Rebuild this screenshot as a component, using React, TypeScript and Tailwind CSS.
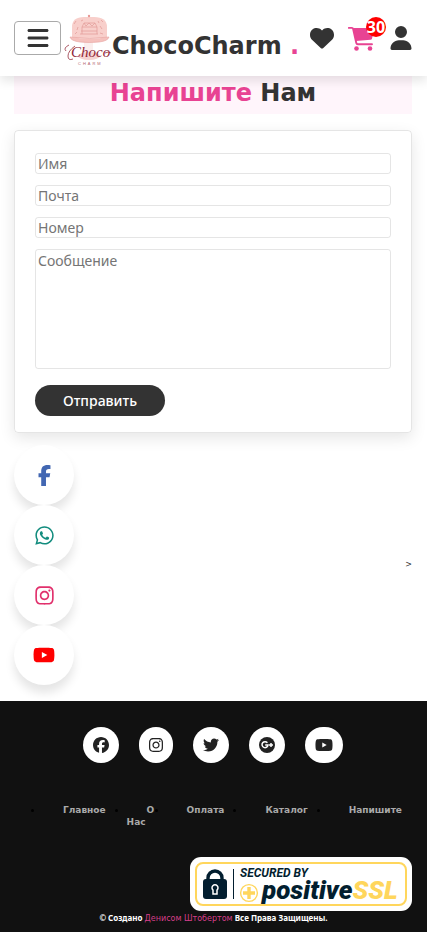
import type { ReactNode } from 'react';
import {
  FaBars,
  FaFacebook,
  FaFacebookF,
  FaHeart,
  FaInstagram,
  FaTwitter,
  FaUser,
  FaWhatsapp,
  FaYoutube,
} from 'react-icons/fa6';

function CakeLogo() {
  return (
    <svg viewBox="0 0 48 52" className="mt-1 h-[52px] w-12 shrink-0" role="img" aria-label="Choco Charm">
      <rect x="20" y="27" width="9" height="14" fill="#fbeeed" />
      <ellipse cx="25" cy="42" rx="11" ry="4" fill="#f6d3d1" />
      <path d="M8 24V13Q8 3 20 3h10Q43 3 43 13v11z" fill="#f8cfcb" />
      <path d="M6 23q20 3 39 0-1 4-10 5-10 1-19 0Q7 27 6 23z" fill="#f5c1bd" stroke="#e6a19e" strokeWidth=".6" />
      <path d="M18 20v-7l2-4h11l2 4v7M18 13h15M17 17h16M20 9l2 3 3-3 3 3 3-3M16 20h18" fill="none" stroke="#e3a09c" strokeWidth=".8" />
      <path d="M10 10l2-3M13 16l1-3M11 20l2-2M39 8l-2-2M38 15l-2-3M39 20l-3-1M17 7l2-1M35 9l-1-2" stroke="#e3a09c" strokeWidth=".8" />
      <circle cx="25" cy="2" r="1.2" fill="#e89a97" />
      <path d="M5 31Q-1 34 2 37M11 32Q4 37 4 42q0 5 5 3M41 39q4-2 6 0" fill="none" stroke="#96303f" strokeWidth=".8" />
      <text x="7" y="43" fontFamily="'Liberation Serif', serif" fontStyle="italic" fontWeight="400" fontSize="15" fill="#902637">Choco</text>
      <text x="14" y="51" fontFamily="'Liberation Sans', sans-serif" fontWeight="400" fontSize="4" letterSpacing="2" fill="#b36470">CHARM</text>
    </svg>
  );
}

function CartIcon() {
  return (
    <svg viewBox="0 0 27 25" className="h-[25px] w-[27px]" fill="none" stroke="currentColor">
      <path d="M.8 1.9h3.1q1 0 1.200 1L8.300 17q.3 1.200 1.500 1.200H24" strokeWidth="1.900" strokeLinecap="round" />
      <path d="M5 1.900h20.500q1 0 .8 1l-2.300 9.500q-.3 1.100-1.500 1.300L7.800 15z" fill="currentColor" stroke="none" />
      <circle cx="8.500" cy="22.500" r="2.300" fill="currentColor" stroke="none" />
      <circle cx="22" cy="22.500" r="2.300" fill="currentColor" stroke="none" />
    </svg>
  );
}

function SslBadge() {
  return (
    <svg viewBox="0 0 222 54" className="h-[54px] w-[222px]" role="img" aria-label="Secured by positiveSSL">
      <rect width="222" height="54" rx="11" fill="#fff" />
      <rect x="6" y="6" width="210" height="42" rx="7" fill="none" stroke="#ffd65c" strokeWidth="2" />
      <path d="M18 24v-3a7 7 0 0 1 14 0v3" fill="none" stroke="#021e2f" strokeWidth="3.4" />
      <rect x="13" y="22" width="24" height="20" rx="3" fill="#021e2f" />
      <path d="M23 33a3 3 0 1 1 4 0v4h-4z" fill="#021e2f" stroke="#fff" strokeWidth="1.5" />
      <path d="M43.5 12v30" stroke="#021e2f" />
      <text x="50" y="20" fontFamily="Roboto, sans-serif" fontStyle="italic" fontWeight="700" fontSize="12" fill="#021e2f">SECURED BY</text>
      <circle cx="59" cy="36" r="8.4" fill="none" stroke="#ffd65c" strokeWidth="1.4" />
      <path d="M59 30v12M53 36h12" stroke="#ffd65c" strokeWidth="3.4" />
      <text x="72" y="42" fontFamily="Roboto, sans-serif" fontStyle="italic" fontWeight="900" fontSize="26" fill="#021e2f">
        positive<tspan fill="#ffd65c">SSL</tspan>
      </text>
    </svg>
  );
}

function GooglePlus() {
  return (
    <svg viewBox="0 0 16 16" className="size-4">
      <circle cx="8" cy="8" r="8" fill="#222" />
      <path d="M8.4 5.8A3 3 0 1 0 9 8.1H6.2M12 6v4M10 8h4" fill="none" stroke="#fff" strokeWidth="1.5" />
    </svg>
  );
}

function Field({ label, type }: { label: string; type: string }) {
  return (
    <input
      type={type}
      aria-label={label}
      placeholder={label}
      className="mb-[11px] block h-[21px] w-full rounded-[3px] border border-black/10 px-0.5 placeholder:text-[#757575]"
    />
  );
}

function SideLink({ label, color, children }: { label: string; color: string; children: ReactNode }) {
  return (
    <a
      href="#"
      aria-label={label}
      className={`flex size-[60px] items-center justify-center rounded-full bg-white shadow-[0_8px_10px_rgba(0,0,0,0.1)] ${color}`}
    >
      {children}
    </a>
  );
}

function FooterLink({ label, width, children }: { label: string; width: string; children: ReactNode }) {
  return (
    <a
      href="#"
      aria-label={label}
      className={`flex h-9 items-center justify-center rounded-full bg-white text-base text-[#222] ${width}`}
    >
      {children}
    </a>
  );
}

const pages = [
  { name: 'Главное', box: '' },
  { name: 'О Нас', box: 'w-[19px]' },
  { name: 'Оплата', box: '' },
  { name: 'Каталог', box: '' },
  { name: 'Напишите', box: '' },
];

export default function App() {
  return (
    <div className="bg-white font-['DejaVu_Sans',sans-serif] text-[#333]">
      <header className="sticky top-0 z-10 flex h-[76px] items-center bg-white px-3.5 shadow-[0_5px_10px_rgba(0,0,0,0.1)]">
        <button
          type="button"
          aria-label="Меню"
          className="flex h-[34px] w-[47px] shrink-0 items-center justify-center rounded-[4px] border border-[#aaa] text-2xl"
        >
          <FaBars />
        </button>
        <a href="#" className="ml-[3px] flex items-center text-2xl font-bold whitespace-nowrap">
          <CakeLogo />
          <span className="pt-4">
            ChocoCharm <span className="text-[#e84393]">.</span>
          </span>
        </a>
        <nav className="ml-auto flex items-center gap-3.5 text-2xl">
          <a href="#" aria-label="Избранное"><FaHeart /></a>
          <a href="#" aria-label="Корзина" className="relative text-[#e84393]">
            <CartIcon />
            <span className="absolute -top-[9px] -right-[11px] flex size-5 items-center justify-center rounded-full bg-[red] font-['Open_Sans',sans-serif] text-base font-bold text-white">
              30
            </span>
          </a>
          <a href="#" aria-label="Профиль"><FaUser /></a>
        </nav>
      </header>

      <main className="pr-[15px] pl-3.5">
        <h1 className="bg-[#fff5fb] pt-px pb-[5px] text-center text-2xl font-bold">
          <span className="text-[#e84393]">Напишите</span> Нам
        </h1>

        <form className="mt-4 rounded-[4px] border border-black/10 px-5 pt-[22px] pb-4 font-['Noto_Sans',sans-serif] text-sm shadow-[0_5px_15px_rgba(0,0,0,0.1)]">
          <Field label="Имя" type="text" />
          <Field label="Почта" type="email" />
          <Field label="Номер" type="tel" />
          <textarea
            aria-label="Сообщение"
            placeholder="Сообщение"
            className="block h-[120px] w-full resize-none rounded-[3px] border border-black/10 px-0.5 pt-px placeholder:text-[#757575]"
          />
          <button type="submit" className="mt-4 h-[31px] w-[130px] rounded-full bg-[#333] font-medium text-white">
            Отправить
          </button>
        </form>

        <section className="mt-3 flex items-center justify-between pb-4">
          <div>
            <SideLink label="Facebook" color="text-[#4267b2]"><FaFacebookF size={21} /></SideLink>
            <SideLink label="WhatsApp" color="text-[#128c7e]"><FaWhatsapp size={21} /></SideLink>
            <SideLink label="Instagram" color="text-[#e1306c]"><FaInstagram size={21} /></SideLink>
            <SideLink label="YouTube" color="text-[red]"><FaYoutube size={22} /></SideLink>
          </div>
          <span className="text-[8px]">&gt;</span>
        </section>
      </main>

      <footer className="bg-[#111] pt-[26px] pb-1.5">
        <div className="flex justify-center gap-5 pr-0.5">
          <FooterLink label="Facebook" width="w-9"><FaFacebook /></FooterLink>
          <FooterLink label="Instagram" width="w-[34px]"><FaInstagram /></FooterLink>
          <FooterLink label="Twitter" width="w-9"><FaTwitter /></FooterLink>
          <FooterLink label="Google Plus" width="w-9"><GooglePlus /></FooterLink>
          <FooterLink label="YouTube" width="w-[38px]"><FaYoutube size={18} /></FooterLink>
        </div>

        <ul className="mt-[41px] flex list-disc gap-[21px] pr-3.5 pl-[43px] text-[9px] leading-3 font-bold marker:text-black">
          {pages.map((page) => (
            <li key={page.name} className={`shrink-0 ${page.box}`}>
              <a href="#" className="pl-5 text-[#aaa]">{page.name}</a>
            </li>
          ))}
        </ul>

        <div className="mt-[29px] flex justify-end pr-[15px]">
          <SslBadge />
        </div>
        <p className="text-center font-['Noto_Sans',sans-serif] text-[8px] leading-[14px] font-bold text-white">
          © Создано <span className="font-['DejaVu_Sans',sans-serif] font-normal text-[#d63f8a]">Денисом Штобертом</span> Все Права Защищены.
        </p>
      </footer>
    </div>
  );
}
